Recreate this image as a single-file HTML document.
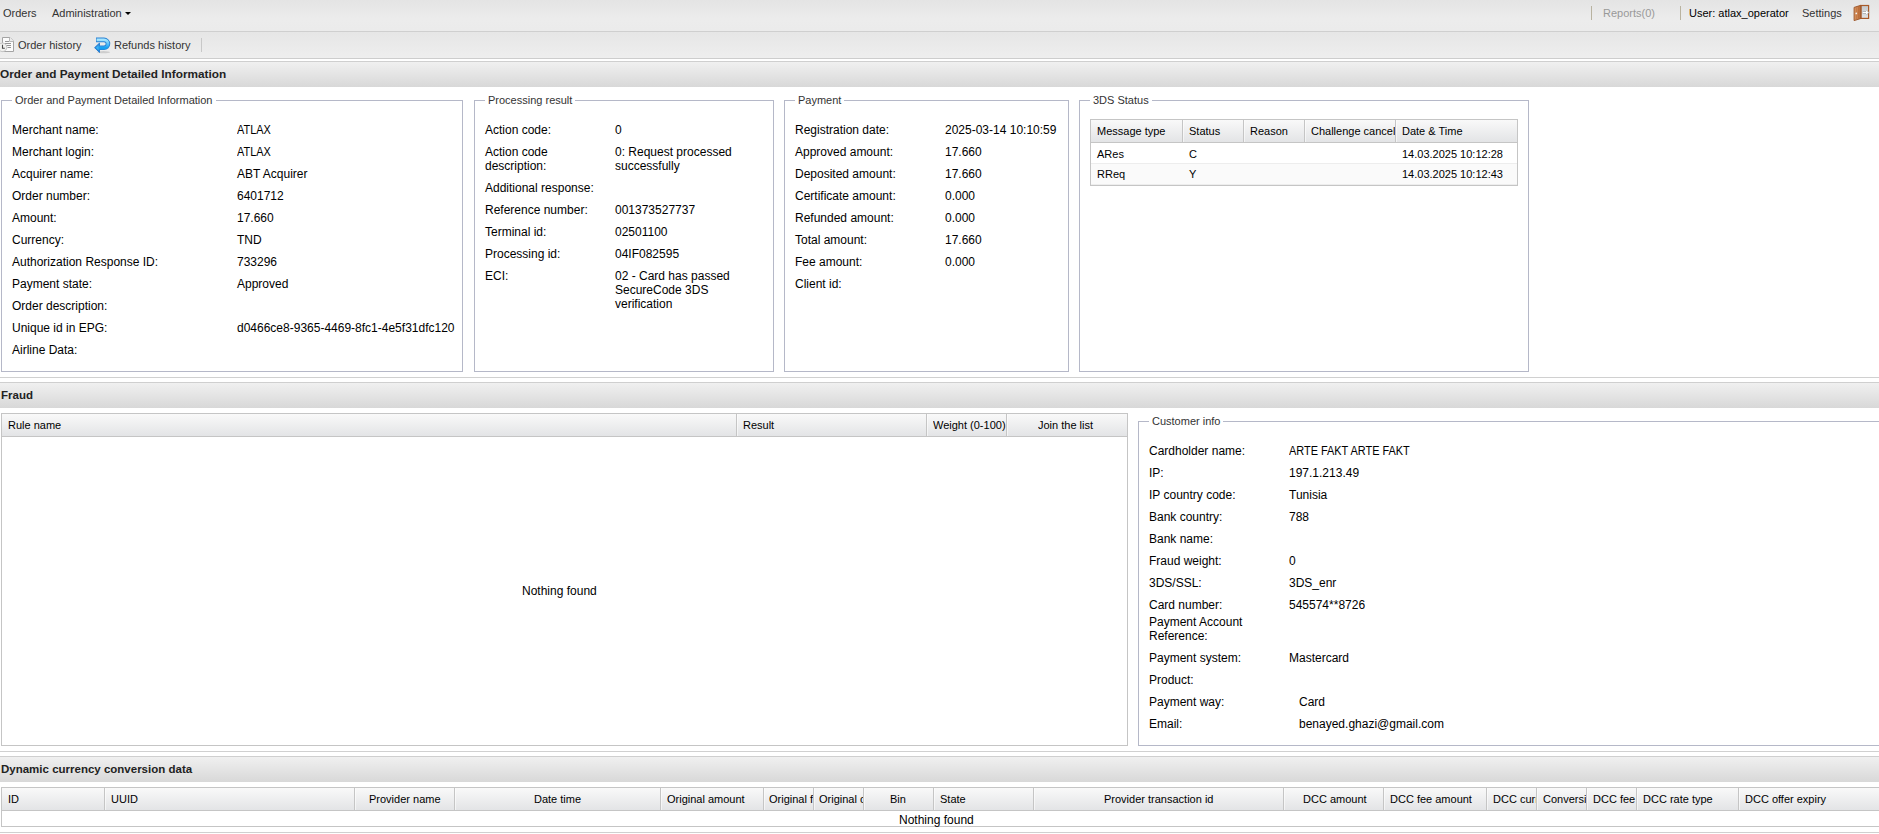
<!DOCTYPE html>
<html><head><meta charset="utf-8">
<style>
*{margin:0;padding:0;box-sizing:border-box}
html,body{width:1879px;height:834px;overflow:hidden;background:#fff;font-family:"Liberation Sans",sans-serif;color:#000}
.a{position:absolute;white-space:nowrap}
.t11{font-size:11px;line-height:13px}
.t12{font-size:12px;line-height:14px}
.tb1{position:absolute;left:0;top:0;width:1879px;height:32px;background:linear-gradient(#e4e4e4,#ececec 60%,#ebebeb);border-bottom:1px solid #cfcfcf}
.tb2{position:absolute;left:0;top:32px;width:1879px;height:27px;background:linear-gradient(#e6e6e6,#eeeeee);border-bottom:1px solid #cdcdcd}
.sep{position:absolute;width:1px;background:#b9b3a0}
.ph{position:absolute;left:0;width:1879px;height:26px;border-top:1px solid #cfcfcf;background:linear-gradient(#f0f0f0,#d8d8d8)}
.ph span{position:absolute;left:1px;top:6px;font-size:12px;line-height:14px;font-weight:bold;color:#222}
.fs{position:absolute;border:1px solid #b5b8c8}
.lg{position:absolute;background:#fff;padding:0 3px;font-size:11px;line-height:13px;color:#333}
.lb{position:absolute;font-size:12px;line-height:14px;color:#000;white-space:nowrap}
.grid{position:absolute;border:1px solid #c5c5c5;background:#fff}
.gh{position:absolute;left:0;top:0;right:0;height:22px;background:linear-gradient(#f9f9f9,#e3e4e6);border-bottom:1px solid #c5c5c5}
.gc{position:absolute;top:0;height:22px;border-right:1px solid #c5c5c5;box-shadow:inset 1px 0 #fff}
.gc span{position:absolute;top:4px;font-size:12px;line-height:14px;white-space:nowrap;overflow:hidden}
</style></head><body>

<!-- top menubar -->
<div class="tb1"></div>
<div class="a t11" style="left:3px;top:7px;color:#333">Orders</div>
<div class="a t11" style="left:52px;top:7px;color:#333">Administration</div>
<div class="a" style="left:125px;top:12px;width:0;height:0;border-left:3px solid transparent;border-right:3px solid transparent;border-top:3px solid #000"></div>
<div class="sep" style="left:1591px;top:6px;height:14px"></div>
<div class="a t11" style="left:1603px;top:7px;color:#999">Reports(0)</div>
<div class="sep" style="left:1680px;top:6px;height:14px"></div>
<div class="a t11" style="left:1689px;top:7px;color:#000">User: atlax_operator</div>
<div class="a t11" style="left:1802px;top:7px;color:#333">Settings</div>

<!-- toolbar -->
<div class="tb2"></div>
<div class="a t11" style="left:18px;top:39px;color:#333">Order history</div>
<div class="a t11" style="left:114px;top:39px;color:#333">Refunds history</div>
<div class="sep" style="left:201px;top:38px;height:14px;background:#c8c8c8"></div>


<!-- icons -->
<svg class="a" style="left:0;top:34px" width="20" height="22" viewBox="0 0 20 22">
 <path d="M2.5 3.5H10L13.5 7V17.5H2.5Z" fill="#fcfcfc" stroke="#a4a4a4" stroke-width="1"/>
 <path d="M9.5 3.5V7.5H13.5" fill="none" stroke="#b8b8b8" stroke-width="1"/>
 <path d="M10 3.5L13.5 7H10Z" fill="#ececec"/>
 <path d="M5 7.5H9M5 9.5H11M6 11.5H11M7.5 13.5H11" stroke="#959595" stroke-width="1"/>
 <circle cx="2.5" cy="13.3" r="4.3" fill="#f1f1ef" stroke="#c4c4c4" stroke-width="1"/>
 <path d="M2.5 10.8V14.3H4.8" fill="none" stroke="#4a4a4a" stroke-width="1.1"/>
</svg>
<svg class="a" style="left:92px;top:34px" width="22" height="22" viewBox="0 0 22 22">
 <defs><linearGradient id="bg1" x1="0" y1="0" x2="0" y2="1"><stop offset="0" stop-color="#a6e6ff"/><stop offset="0.6" stop-color="#4cbaf8"/><stop offset="1" stop-color="#14a0f2"/></linearGradient></defs>
 <ellipse cx="11.5" cy="18.2" rx="6.5" ry="1.1" fill="#000" opacity="0.13"/>
 <path d="M4 5.9H12A3.95 3.95 0 0 1 12 13.8H7" fill="none" stroke="#2a82d4" stroke-width="4.6" stroke-linejoin="round"/>
 <path d="M2.6 13.7L7.5 9.1V18.5Z" fill="#2a82d4" stroke="#2a82d4" stroke-width="1" stroke-linejoin="round"/>
 <path d="M4.6 5.9H12A3.95 3.95 0 0 1 12 13.8H7" fill="none" stroke="url(#bg1)" stroke-width="2.8" stroke-linejoin="round"/>
 <path d="M3.9 13.7L6.7 11V16.4Z" fill="#38b6f6"/>
</svg>
<svg class="a" style="left:1850px;top:2px" width="22" height="22" viewBox="0 0 22 22">
 <defs><linearGradient id="dg" x1="0" y1="0" x2="1" y2="0"><stop offset="0" stop-color="#dc9a66"/><stop offset="1" stop-color="#b86a35"/></linearGradient>
 <linearGradient id="ig" x1="0" y1="0" x2="0" y2="1"><stop offset="0" stop-color="#c4c8cc"/><stop offset="1" stop-color="#e2e4e6"/></linearGradient></defs>
 <rect x="11" y="3.5" width="7.6" height="12.9" fill="url(#ig)" stroke="#a85a2a" stroke-width="1.2"/>
 <path d="M4.1 5.4L10.8 3.3V16.5L4.1 18.6Z" fill="url(#dg)" stroke="#984f22" stroke-width="0.9" stroke-linejoin="round"/>
 <path d="M6.3 5.5V17M8.6 4.8V16" stroke="#b06030" stroke-width="0.6" opacity="0.7"/>
 <circle cx="6.3" cy="11.4" r="0.85" fill="#f4f4f4"/>
 <path d="M12.6 10.5H17.6M15.6 8.5L17.8 10.5L15.6 12.5" fill="none" stroke="#9a9a9a" stroke-width="2.2"/>
 <path d="M12.6 10.5H17.6M15.6 8.5L17.8 10.5L15.6 12.5" fill="none" stroke="#fff" stroke-width="1.1"/>
</svg>

<!-- panel 1 header -->
<div class="ph" style="top:61px"><span style="font-size:11.8px;left:0;top:5px">Order and Payment Detailed Information</span></div>


<div class="a" style="left:1px;top:100px;width:462px;height:272px;border:1px solid #b5b8c8"></div>
<div class="a lg" style="left:12px;top:94px">Order and Payment Detailed Information</div>
<div class="a" style="left:12px;top:123px;font-size:12px;line-height:14px">Merchant name:</div>
<div class="a" style="left:237px;top:123px;font-size:12px;line-height:14px;transform:scaleX(0.91);transform-origin:0 0">ATLAX</div>
<div class="a" style="left:12px;top:145px;font-size:12px;line-height:14px">Merchant login:</div>
<div class="a" style="left:237px;top:145px;font-size:12px;line-height:14px;transform:scaleX(0.91);transform-origin:0 0">ATLAX</div>
<div class="a" style="left:12px;top:167px;font-size:12px;line-height:14px">Acquirer name:</div>
<div class="a" style="left:237px;top:167px;font-size:12px;line-height:14px">ABT Acquirer</div>
<div class="a" style="left:12px;top:189px;font-size:12px;line-height:14px">Order number:</div>
<div class="a" style="left:237px;top:189px;font-size:12px;line-height:14px">6401712</div>
<div class="a" style="left:12px;top:211px;font-size:12px;line-height:14px">Amount:</div>
<div class="a" style="left:237px;top:211px;font-size:12px;line-height:14px">17.660</div>
<div class="a" style="left:12px;top:233px;font-size:12px;line-height:14px">Currency:</div>
<div class="a" style="left:237px;top:233px;font-size:12px;line-height:14px">TND</div>
<div class="a" style="left:12px;top:255px;font-size:12px;line-height:14px">Authorization Response ID:</div>
<div class="a" style="left:237px;top:255px;font-size:12px;line-height:14px">733296</div>
<div class="a" style="left:12px;top:277px;font-size:12px;line-height:14px">Payment state:</div>
<div class="a" style="left:237px;top:277px;font-size:12px;line-height:14px">Approved</div>
<div class="a" style="left:12px;top:299px;font-size:12px;line-height:14px">Order description:</div>
<div class="a" style="left:12px;top:321px;font-size:12px;line-height:14px">Unique id in EPG:</div>
<div class="a" style="left:237px;top:321px;font-size:12px;line-height:14px">d0466ce8-9365-4469-8fc1-4e5f31dfc120</div>
<div class="a" style="left:12px;top:343px;font-size:12px;line-height:14px">Airline Data:</div>
<div class="a" style="left:474px;top:100px;width:300px;height:272px;border:1px solid #b5b8c8"></div>
<div class="a lg" style="left:485px;top:94px">Processing result</div>
<div class="a" style="left:485px;top:123px;font-size:12px;line-height:14px">Action code:</div>
<div class="a" style="left:615px;top:123px;font-size:12px;line-height:14px">0</div>
<div class="a" style="left:485px;top:145px;font-size:12px;line-height:14px">Action code</div>
<div class="a" style="left:485px;top:159px;font-size:12px;line-height:14px">description:</div>
<div class="a" style="left:615px;top:145px;font-size:12px;line-height:14px">0: Request processed</div>
<div class="a" style="left:615px;top:159px;font-size:12px;line-height:14px">successfully</div>
<div class="a" style="left:485px;top:181px;font-size:12px;line-height:14px">Additional response:</div>
<div class="a" style="left:485px;top:203px;font-size:12px;line-height:14px">Reference number:</div>
<div class="a" style="left:615px;top:203px;font-size:12px;line-height:14px">001373527737</div>
<div class="a" style="left:485px;top:225px;font-size:12px;line-height:14px">Terminal id:</div>
<div class="a" style="left:615px;top:225px;font-size:12px;line-height:14px">02501100</div>
<div class="a" style="left:485px;top:247px;font-size:12px;line-height:14px">Processing id:</div>
<div class="a" style="left:615px;top:247px;font-size:12px;line-height:14px">04IF082595</div>
<div class="a" style="left:485px;top:269px;font-size:12px;line-height:14px">ECI:</div>
<div class="a" style="left:615px;top:269px;font-size:12px;line-height:14px">02 - Card has passed</div>
<div class="a" style="left:615px;top:283px;font-size:12px;line-height:14px">SecureCode 3DS</div>
<div class="a" style="left:615px;top:297px;font-size:12px;line-height:14px">verification</div>
<div class="a" style="left:784px;top:100px;width:285px;height:272px;border:1px solid #b5b8c8"></div>
<div class="a lg" style="left:795px;top:94px">Payment</div>
<div class="a" style="left:795px;top:123px;font-size:12px;line-height:14px">Registration date:</div>
<div class="a" style="left:945px;top:123px;font-size:12px;line-height:14px">2025-03-14 10:10:59</div>
<div class="a" style="left:795px;top:145px;font-size:12px;line-height:14px">Approved amount:</div>
<div class="a" style="left:945px;top:145px;font-size:12px;line-height:14px">17.660</div>
<div class="a" style="left:795px;top:167px;font-size:12px;line-height:14px">Deposited amount:</div>
<div class="a" style="left:945px;top:167px;font-size:12px;line-height:14px">17.660</div>
<div class="a" style="left:795px;top:189px;font-size:12px;line-height:14px">Certificate amount:</div>
<div class="a" style="left:945px;top:189px;font-size:12px;line-height:14px">0.000</div>
<div class="a" style="left:795px;top:211px;font-size:12px;line-height:14px">Refunded amount:</div>
<div class="a" style="left:945px;top:211px;font-size:12px;line-height:14px">0.000</div>
<div class="a" style="left:795px;top:233px;font-size:12px;line-height:14px">Total amount:</div>
<div class="a" style="left:945px;top:233px;font-size:12px;line-height:14px">17.660</div>
<div class="a" style="left:795px;top:255px;font-size:12px;line-height:14px">Fee amount:</div>
<div class="a" style="left:945px;top:255px;font-size:12px;line-height:14px">0.000</div>
<div class="a" style="left:795px;top:277px;font-size:12px;line-height:14px">Client id:</div>
<div class="a" style="left:1079px;top:100px;width:450px;height:272px;border:1px solid #b5b8c8"></div>
<div class="a lg" style="left:1090px;top:94px">3DS Status</div>
<div class="a" style="left:1090px;top:119px;width:428px;height:67px;border:1px solid #c5c5c5;background:#fff"></div>
<div class="a" style="left:1091px;top:120px;width:426px;height:22px;background:linear-gradient(#f9f9f9,#e3e4e6)"></div>
<div class="a" style="left:1091px;top:142px;width:426px;height:1px;background:#c5c5c5"></div>
<div class="a" style="left:1182px;top:120px;width:1px;height:22px;background:#c5c5c5"></div>
<div class="a" style="left:1183px;top:120px;width:1px;height:22px;background:rgba(255,255,255,0.55)"></div>
<div class="a" style="left:1243px;top:120px;width:1px;height:22px;background:#c5c5c5"></div>
<div class="a" style="left:1244px;top:120px;width:1px;height:22px;background:rgba(255,255,255,0.55)"></div>
<div class="a" style="left:1304px;top:120px;width:1px;height:22px;background:#c5c5c5"></div>
<div class="a" style="left:1305px;top:120px;width:1px;height:22px;background:rgba(255,255,255,0.55)"></div>
<div class="a" style="left:1395px;top:120px;width:1px;height:22px;background:#c5c5c5"></div>
<div class="a" style="left:1396px;top:120px;width:1px;height:22px;background:rgba(255,255,255,0.55)"></div>
<div class="a" style="left:1097px;top:125px;width:85px;overflow:hidden;font-size:11px;line-height:13px">Message type</div>
<div class="a" style="left:1189px;top:125px;width:54px;overflow:hidden;font-size:11px;line-height:13px">Status</div>
<div class="a" style="left:1250px;top:125px;width:54px;overflow:hidden;font-size:11px;line-height:13px">Reason</div>
<div class="a" style="left:1311px;top:125px;width:84px;overflow:hidden;font-size:11px;line-height:13px">Challenge cancel</div>
<div class="a" style="left:1402px;top:125px;width:114px;overflow:hidden;font-size:11px;line-height:13px">Date &amp; Time</div>
<div class="a" style="left:1091px;top:163px;width:426px;height:1px;background:#ededed"></div>
<div class="a" style="left:1091px;top:164px;width:426px;height:20px;background:#fafafa"></div>
<div class="a" style="left:1091px;top:184px;width:426px;height:1px;background:#ededed"></div>
<div class="a" style="left:1097px;top:148px;font-size:11px;line-height:13px">ARes</div>
<div class="a" style="left:1189px;top:148px;font-size:11px;line-height:13px">C</div>
<div class="a" style="left:1402px;top:148px;font-size:11px;line-height:13px">14.03.2025 10:12:28</div>
<div class="a" style="left:1097px;top:168px;font-size:11px;line-height:13px">RReq</div>
<div class="a" style="left:1189px;top:168px;font-size:11px;line-height:13px">Y</div>
<div class="a" style="left:1402px;top:168px;font-size:11px;line-height:13px">14.03.2025 10:12:43</div>
<div class="a" style="left:0px;top:377px;width:1879px;height:1px;background:#d0d0d0"></div>
<div class="ph" style="top:382px"><span style="font-size:11.5px;top:5px">Fraud</span></div>
<div class="a" style="left:1px;top:413px;width:1127px;height:333px;border:1px solid #c5c5c5;background:#fff"></div>
<div class="a" style="left:2px;top:414px;width:1125px;height:22px;background:linear-gradient(#f9f9f9,#e3e4e6)"></div>
<div class="a" style="left:2px;top:436px;width:1125px;height:1px;background:#c5c5c5"></div>
<div class="a" style="left:736px;top:414px;width:1px;height:22px;background:#c5c5c5"></div>
<div class="a" style="left:737px;top:414px;width:1px;height:22px;background:rgba(255,255,255,0.55)"></div>
<div class="a" style="left:926px;top:414px;width:1px;height:22px;background:#c5c5c5"></div>
<div class="a" style="left:927px;top:414px;width:1px;height:22px;background:rgba(255,255,255,0.55)"></div>
<div class="a" style="left:1006px;top:414px;width:1px;height:22px;background:#c5c5c5"></div>
<div class="a" style="left:1007px;top:414px;width:1px;height:22px;background:rgba(255,255,255,0.55)"></div>
<div class="a" style="left:8px;top:419px;width:728px;overflow:hidden;font-size:11px;line-height:13px">Rule name</div>
<div class="a" style="left:743px;top:419px;width:183px;overflow:hidden;font-size:11px;line-height:13px">Result</div>
<div class="a" style="left:933px;top:419px;width:73px;overflow:hidden;font-size:11px;line-height:13px">Weight (0-100)</div>
<div class="a" style="left:1038px;top:419px;width:88px;overflow:hidden;font-size:11px;line-height:13px">Join the list</div>
<div class="a" style="left:522px;top:584px;font-size:12px;line-height:14px">Nothing found</div>
<div class="a" style="left:1138px;top:421px;width:753px;height:325px;border:1px solid #b5b8c8"></div>
<div class="a lg" style="left:1149px;top:415px">Customer info</div>
<div class="a" style="left:1149px;top:444px;font-size:12px;line-height:14px">Cardholder name:</div>
<div class="a" style="left:1289px;top:444px;font-size:12px;line-height:14px;transform:scaleX(0.91);transform-origin:0 0">ARTE FAKT ARTE FAKT</div>
<div class="a" style="left:1149px;top:466px;font-size:12px;line-height:14px">IP:</div>
<div class="a" style="left:1289px;top:466px;font-size:12px;line-height:14px">197.1.213.49</div>
<div class="a" style="left:1149px;top:488px;font-size:12px;line-height:14px">IP country code:</div>
<div class="a" style="left:1289px;top:488px;font-size:12px;line-height:14px">Tunisia</div>
<div class="a" style="left:1149px;top:510px;font-size:12px;line-height:14px">Bank country:</div>
<div class="a" style="left:1289px;top:510px;font-size:12px;line-height:14px">788</div>
<div class="a" style="left:1149px;top:532px;font-size:12px;line-height:14px">Bank name:</div>
<div class="a" style="left:1149px;top:554px;font-size:12px;line-height:14px">Fraud weight:</div>
<div class="a" style="left:1289px;top:554px;font-size:12px;line-height:14px">0</div>
<div class="a" style="left:1149px;top:576px;font-size:12px;line-height:14px">3DS/SSL:</div>
<div class="a" style="left:1289px;top:576px;font-size:12px;line-height:14px">3DS_enr</div>
<div class="a" style="left:1149px;top:598px;font-size:12px;line-height:14px">Card number:</div>
<div class="a" style="left:1289px;top:598px;font-size:12px;line-height:14px">545574**8726</div>
<div class="a" style="left:1149px;top:615px;font-size:12px;line-height:14px">Payment Account</div>
<div class="a" style="left:1149px;top:629px;font-size:12px;line-height:14px">Reference:</div>
<div class="a" style="left:1149px;top:651px;font-size:12px;line-height:14px">Payment system:</div>
<div class="a" style="left:1289px;top:651px;font-size:12px;line-height:14px">Mastercard</div>
<div class="a" style="left:1149px;top:673px;font-size:12px;line-height:14px">Product:</div>
<div class="a" style="left:1149px;top:695px;font-size:12px;line-height:14px">Payment way:</div>
<div class="a" style="left:1299px;top:695px;font-size:12px;line-height:14px">Card</div>
<div class="a" style="left:1149px;top:717px;font-size:12px;line-height:14px">Email:</div>
<div class="a" style="left:1299px;top:717px;font-size:12px;line-height:14px">benayed.ghazi@gmail.com</div>
<div class="a" style="left:0px;top:751px;width:1879px;height:1px;background:#d0d0d0"></div>
<div class="ph" style="top:756px"><span style="font-size:11.5px;top:5px">Dynamic currency conversion data</span></div>
<div class="a" style="left:1px;top:787px;width:1890px;height:40px;border:1px solid #c5c5c5;background:#fff"></div>
<div class="a" style="left:2px;top:788px;width:1890px;height:22px;background:linear-gradient(#f9f9f9,#e3e4e6)"></div>
<div class="a" style="left:2px;top:810px;width:1890px;height:1px;background:#c5c5c5"></div>
<div class="a" style="left:104px;top:788px;width:1px;height:22px;background:#c5c5c5"></div>
<div class="a" style="left:105px;top:788px;width:1px;height:22px;background:rgba(255,255,255,0.55)"></div>
<div class="a" style="left:354px;top:788px;width:1px;height:22px;background:#c5c5c5"></div>
<div class="a" style="left:355px;top:788px;width:1px;height:22px;background:rgba(255,255,255,0.55)"></div>
<div class="a" style="left:454px;top:788px;width:1px;height:22px;background:#c5c5c5"></div>
<div class="a" style="left:455px;top:788px;width:1px;height:22px;background:rgba(255,255,255,0.55)"></div>
<div class="a" style="left:660px;top:788px;width:1px;height:22px;background:#c5c5c5"></div>
<div class="a" style="left:661px;top:788px;width:1px;height:22px;background:rgba(255,255,255,0.55)"></div>
<div class="a" style="left:763px;top:788px;width:1px;height:22px;background:#c5c5c5"></div>
<div class="a" style="left:764px;top:788px;width:1px;height:22px;background:rgba(255,255,255,0.55)"></div>
<div class="a" style="left:813px;top:788px;width:1px;height:22px;background:#c5c5c5"></div>
<div class="a" style="left:814px;top:788px;width:1px;height:22px;background:rgba(255,255,255,0.55)"></div>
<div class="a" style="left:863px;top:788px;width:1px;height:22px;background:#c5c5c5"></div>
<div class="a" style="left:864px;top:788px;width:1px;height:22px;background:rgba(255,255,255,0.55)"></div>
<div class="a" style="left:933px;top:788px;width:1px;height:22px;background:#c5c5c5"></div>
<div class="a" style="left:934px;top:788px;width:1px;height:22px;background:rgba(255,255,255,0.55)"></div>
<div class="a" style="left:1033px;top:788px;width:1px;height:22px;background:#c5c5c5"></div>
<div class="a" style="left:1034px;top:788px;width:1px;height:22px;background:rgba(255,255,255,0.55)"></div>
<div class="a" style="left:1283px;top:788px;width:1px;height:22px;background:#c5c5c5"></div>
<div class="a" style="left:1284px;top:788px;width:1px;height:22px;background:rgba(255,255,255,0.55)"></div>
<div class="a" style="left:1383px;top:788px;width:1px;height:22px;background:#c5c5c5"></div>
<div class="a" style="left:1384px;top:788px;width:1px;height:22px;background:rgba(255,255,255,0.55)"></div>
<div class="a" style="left:1486px;top:788px;width:1px;height:22px;background:#c5c5c5"></div>
<div class="a" style="left:1487px;top:788px;width:1px;height:22px;background:rgba(255,255,255,0.55)"></div>
<div class="a" style="left:1536px;top:788px;width:1px;height:22px;background:#c5c5c5"></div>
<div class="a" style="left:1537px;top:788px;width:1px;height:22px;background:rgba(255,255,255,0.55)"></div>
<div class="a" style="left:1586px;top:788px;width:1px;height:22px;background:#c5c5c5"></div>
<div class="a" style="left:1587px;top:788px;width:1px;height:22px;background:rgba(255,255,255,0.55)"></div>
<div class="a" style="left:1636px;top:788px;width:1px;height:22px;background:#c5c5c5"></div>
<div class="a" style="left:1637px;top:788px;width:1px;height:22px;background:rgba(255,255,255,0.55)"></div>
<div class="a" style="left:1738px;top:788px;width:1px;height:22px;background:#c5c5c5"></div>
<div class="a" style="left:1739px;top:788px;width:1px;height:22px;background:rgba(255,255,255,0.55)"></div>
<div class="a" style="left:8px;top:793px;width:96px;overflow:hidden;font-size:11px;line-height:13px">ID</div>
<div class="a" style="left:111px;top:793px;width:243px;overflow:hidden;font-size:11px;line-height:13px">UUID</div>
<div class="a" style="left:369px;top:793px;width:85px;overflow:hidden;font-size:11px;line-height:13px">Provider name</div>
<div class="a" style="left:534px;top:793px;width:126px;overflow:hidden;font-size:11px;line-height:13px">Date time</div>
<div class="a" style="left:667px;top:793px;width:96px;overflow:hidden;font-size:11px;line-height:13px">Original amount</div>
<div class="a" style="left:769px;top:793px;width:44px;overflow:hidden;font-size:11px;line-height:13px">Original f</div>
<div class="a" style="left:819px;top:793px;width:44px;overflow:hidden;font-size:11px;line-height:13px">Original c</div>
<div class="a" style="left:890px;top:793px;width:43px;overflow:hidden;font-size:11px;line-height:13px">Bin</div>
<div class="a" style="left:940px;top:793px;width:93px;overflow:hidden;font-size:11px;line-height:13px">State</div>
<div class="a" style="left:1104px;top:793px;width:179px;overflow:hidden;font-size:11px;line-height:13px">Provider transaction id</div>
<div class="a" style="left:1303px;top:793px;width:80px;overflow:hidden;font-size:11px;line-height:13px">DCC amount</div>
<div class="a" style="left:1390px;top:793px;width:96px;overflow:hidden;font-size:11px;line-height:13px">DCC fee amount</div>
<div class="a" style="left:1493px;top:793px;width:43px;overflow:hidden;font-size:11px;line-height:13px">DCC curr</div>
<div class="a" style="left:1543px;top:793px;width:43px;overflow:hidden;font-size:11px;line-height:13px">Conversi</div>
<div class="a" style="left:1593px;top:793px;width:43px;overflow:hidden;font-size:11px;line-height:13px">DCC fee</div>
<div class="a" style="left:1643px;top:793px;width:95px;overflow:hidden;font-size:11px;line-height:13px">DCC rate type</div>
<div class="a" style="left:1745px;top:793px;width:134px;overflow:hidden;font-size:11px;line-height:13px">DCC offer expiry</div>
<div class="a" style="left:899px;top:813px;font-size:12px;line-height:14px">Nothing found</div>
<div class="a" style="left:0px;top:832px;width:1879px;height:1px;background:#d0d0d0"></div>
</body></html>
